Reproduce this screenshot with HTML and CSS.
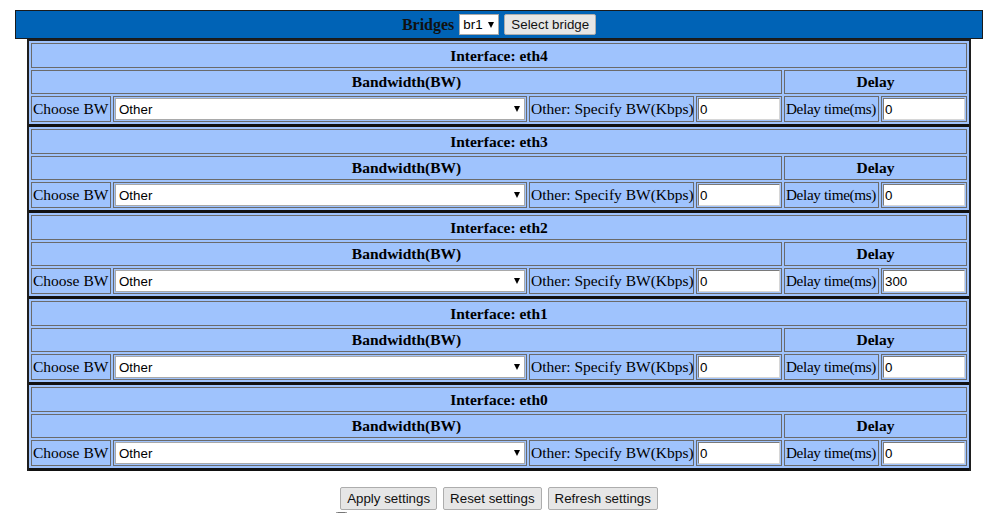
FILE: index.html
```html
<!DOCTYPE html>
<html>
<head>
<meta charset="utf-8">
<title>Bridges</title>
<link rel="stylesheet" href="styles.css">
</head>
<body>
<div class="page">
  <div class="bridgebar">
    <span class="bar-title">Bridges</span>
    <span class="dd dd-small"><select class="sel sel-small"><option>br1</option></select></span>
    <button class="btn btn-bar">Select bridge</button>
  </div>

  <div class="panel">
    <div class="section">
      <div class="cell head span-all">Interface: eth4</div>
      <div class="cell head span-bw">Bandwidth(BW)</div>
      <div class="cell head span-delay">Delay</div>
      <div class="cell label">Choose BW</div>
      <div class="cell field"><span class="dd"><select class="sel"><option>Other</option></select></span></div>
      <div class="cell label">Other: Specify BW(Kbps)</div>
      <div class="cell field"><input class="txt" value="0"></div>
      <div class="cell label label-tight">Delay time(ms)</div>
      <div class="cell field"><input class="txt" value="0"></div>
    </div>
    <div class="section">
      <div class="cell head span-all">Interface: eth3</div>
      <div class="cell head span-bw">Bandwidth(BW)</div>
      <div class="cell head span-delay">Delay</div>
      <div class="cell label">Choose BW</div>
      <div class="cell field"><span class="dd"><select class="sel"><option>Other</option></select></span></div>
      <div class="cell label">Other: Specify BW(Kbps)</div>
      <div class="cell field"><input class="txt" value="0"></div>
      <div class="cell label label-tight">Delay time(ms)</div>
      <div class="cell field"><input class="txt" value="0"></div>
    </div>
    <div class="section">
      <div class="cell head span-all">Interface: eth2</div>
      <div class="cell head span-bw">Bandwidth(BW)</div>
      <div class="cell head span-delay">Delay</div>
      <div class="cell label">Choose BW</div>
      <div class="cell field"><span class="dd"><select class="sel"><option>Other</option></select></span></div>
      <div class="cell label">Other: Specify BW(Kbps)</div>
      <div class="cell field"><input class="txt" value="0"></div>
      <div class="cell label label-tight">Delay time(ms)</div>
      <div class="cell field"><input class="txt" value="300"></div>
    </div>
    <div class="section">
      <div class="cell head span-all">Interface: eth1</div>
      <div class="cell head span-bw">Bandwidth(BW)</div>
      <div class="cell head span-delay">Delay</div>
      <div class="cell label">Choose BW</div>
      <div class="cell field"><span class="dd"><select class="sel"><option>Other</option></select></span></div>
      <div class="cell label">Other: Specify BW(Kbps)</div>
      <div class="cell field"><input class="txt" value="0"></div>
      <div class="cell label label-tight">Delay time(ms)</div>
      <div class="cell field"><input class="txt" value="0"></div>
    </div>
    <div class="section">
      <div class="cell head span-all">Interface: eth0</div>
      <div class="cell head span-bw">Bandwidth(BW)</div>
      <div class="cell head span-delay">Delay</div>
      <div class="cell label">Choose BW</div>
      <div class="cell field"><span class="dd"><select class="sel"><option>Other</option></select></span></div>
      <div class="cell label">Other: Specify BW(Kbps)</div>
      <div class="cell field"><input class="txt" value="0"></div>
      <div class="cell label label-tight">Delay time(ms)</div>
      <div class="cell field"><input class="txt" value="0"></div>
    </div>
  </div>

  <div class="actions">
    <button class="btn btn-act">Apply settings</button>
    <button class="btn btn-act">Reset settings</button>
    <button class="btn btn-act">Refresh settings</button>
  </div>
  <div class="note"><input type="checkbox" class="chk"><span>Display bandwidth and delay settings of all interfaces</span></div>
</div>
</body>
</html>
```

FILE: styles.css
```css
* { box-sizing: border-box; }

body {
  margin: 0;
  background: #ffffff;
  font-family: "Liberation Serif", "Times New Roman", serif;
  color: #000;
}

.page {
  width: 998px;
  padding-top: 10px;
}

.bridgebar {
  width: 968px;
  height: 29px;
  margin: 0 auto;
  background: #0063b6;
  border: 1px solid #1a1a1a;
  display: flex;
  align-items: center;
  justify-content: center;
  gap: 5px;
}

.bar-title {
  font-weight: bold;
  font-size: 16px;
  color: #111;
}

.panel {
  width: 944px;
  margin: 0 auto;
  background: #9fc3fd;
  border: 2px solid #1e1e1e;
  border-bottom: 0;
}

.section {
  display: grid;
  grid-template-columns: 80px 414px 165px 86px 95px 86px;
  grid-template-rows: 25px 24px 26px;
  gap: 2px;
  padding: 2px;
  border-bottom: 3px solid #111;
}

.cell {
  border: 1px solid #6a6a6a;
  background: #9fc3fd;
  font-size: 15.5px;
  display: flex;
  align-items: center;
  padding: 0 1px;
  white-space: nowrap;
}

.label {
  padding: 0 0 0 1px;
}

.label-tight {
  font-size: 15.2px;
  letter-spacing: -0.35px;
}

.head {
  justify-content: center;
  font-weight: bold;
}

.span-all { grid-column: 1 / -1; }
.span-bw { grid-column: 1 / 5; }
.span-delay { grid-column: 5 / 7; }

.field { padding: 1px; }

.dd {
  position: relative;
  display: block;
  width: 100%;
}

.dd::after {
  content: "";
  position: absolute;
  right: 5px;
  top: 50%;
  margin-top: -3px;
  border-left: 3px solid transparent;
  border-right: 3px solid transparent;
  border-top: 6px solid #000;
  pointer-events: none;
}

.sel {
  -webkit-appearance: none;
  appearance: none;
  display: block;
  width: 100%;
  height: 22px;
  margin: 0;
  border: 1px solid #a9a9a9;
  border-radius: 0;
  background: #fff;
  font: 13.33px "Liberation Sans", Arial, sans-serif;
  color: #000;
  padding: 0 3px;
}

.dd-small {
  width: 40px;
}

.sel-small {
  height: 21px;
  padding: 0 3px;
}

.txt {
  display: block;
  width: 100%;
  height: 22px;
  margin: 0;
  border: 1px solid;
  border-color: #7a7a7a #d6d6d6 #d6d6d6 #7a7a7a;
  background: #fff;
  font: 13.33px "Liberation Sans", Arial, sans-serif;
  color: #000;
  padding: 0 1px;
}

.btn {
  font: 13.33px "Liberation Sans", Arial, sans-serif;
  color: #111;
  background: #e6e6e6;
  border: 1px solid #adadad;
  border-radius: 2px;
  padding: 0 6px;
  margin: 0;
}

.btn-bar { height: 21px; }
.btn-act { height: 23px; }

.actions {
  display: flex;
  justify-content: center;
  gap: 6px;
  margin-top: 16px;
}

.note {
  display: flex;
  justify-content: center;
  align-items: center;
  gap: 3px;
  margin-top: 1px;
  font: 13.33px "Liberation Sans", Arial, sans-serif;
  color: #444;
}

.chk {
  margin: 0;
  width: 13px;
  height: 13px;
}
```
